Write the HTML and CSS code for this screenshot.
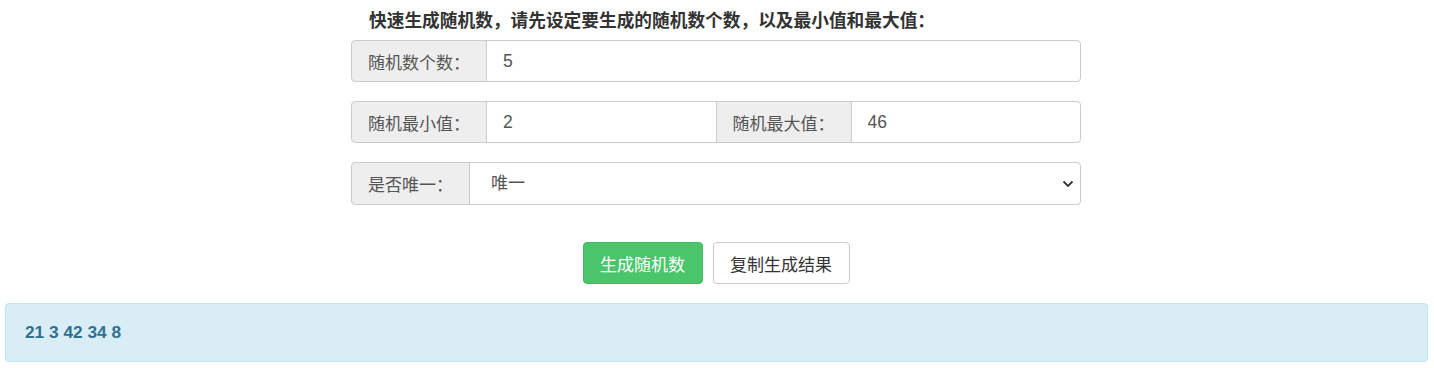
FILE: index.html
```html
<!DOCTYPE html>
<html lang="zh-CN">
<head>
    <meta charset="UTF-8">
    <meta name="viewport" content="width=device-width, initial-scale=1.0">
    <title>随机数生成器</title>
    <link rel="stylesheet" href="styles.css">
</head>
<body>
    <div class="container">
        <h3 class="intro">快速生成随机数，请先设定要生成的随机数个数，以及最小值和最大值：</h3>

        <div class="input-group">
            <span class="addon">随机数个数：</span>
            <input type="text" class="field" value="5">
        </div>

        <div class="input-group">
            <span class="addon">随机最小值：</span>
            <input type="text" class="field" value="2">
            <span class="addon">随机最大值：</span>
            <input type="text" class="field" value="46">
        </div>

        <div class="input-group select-group">
            <span class="addon">是否唯一：</span>
            <select class="field">
                <option value="1">唯一</option>
                <option value="0">不唯一</option>
            </select>
            <svg class="chevron" width="12" height="8" viewBox="0 0 12 8">
                <path d="M1.5 1.5 L6 6 L10.5 1.5" fill="none" stroke="#333" stroke-width="1.8"/>
            </svg>
        </div>

        <div class="actions">
            <button class="btn btn-green">生成随机数</button>
            <button class="btn btn-default">复制生成结果</button>
        </div>
    </div>

    <div class="alert">21 3 42 34 8</div>
</body>
</html>
```

FILE: styles.css
```css
body {
    font-family: "Liberation Sans", Arial, "Noto Sans CJK SC", sans-serif;
    margin: 0;
    padding: 0;
    background-color: #fff;
    color: #333;
}
.container {
    width: 730px;
    margin: 0 auto;
    padding: 8px 2px 0 0;
}
.intro {
    margin: 0 0 6px 18px;
    font-size: 17.7px;
    line-height: 26px;
    font-weight: bold;
    color: #333;
}
.input-group {
    display: flex;
    height: 42px;
    margin-bottom: 19px;
    position: relative;
}
.addon {
    display: flex;
    align-items: center;
    padding: 0 16px;
    font-size: 17px;
    color: #555;
    background-color: #eee;
    border: 1px solid #ccc;
    white-space: nowrap;
}
.input-group > .addon:first-child {
    border-radius: 4px 0 0 4px;
}
.input-group > * + * {
    margin-left: -1px;
}
.field {
    flex: 1;
    min-width: 0;
    box-sizing: border-box;
    height: 100%;
    padding: 0 16px;
    font-family: inherit;
    font-size: 17.5px;
    color: #555;
    background: #fff;
    border: 1px solid #ccc;
    outline: none;
}
.input-group > .field:last-of-type {
    border-radius: 0 4px 4px 0;
}
.select-group {
    height: 43px;
}
.select-group select {
    appearance: none;
    -webkit-appearance: none;
    padding-left: 21px;
    font-size: 17px;
}
.chevron {
    position: absolute;
    right: 7px;
    top: 18px;
}
.actions {
    display: flex;
    justify-content: center;
    gap: 10px;
    margin-top: 37px;
    margin-bottom: 19px;
}
.btn {
    height: 42px;
    padding: 0 16.5px;
    font-family: inherit;
    font-size: 17px;
    border-radius: 4px;
    border: 1px solid transparent;
    cursor: pointer;
}
.btn-green {
    color: #fff;
    background-color: #4bc56b;
    border-color: #44bb63;
}
.btn-default {
    color: #333;
    background-color: #fff;
    border-color: #ccc;
}
.alert {
    margin: 0 6px 0 5px;
    height: 59px;
    box-sizing: border-box;
    display: flex;
    align-items: center;
    padding: 0 19px;
    font-size: 17.3px;
    font-weight: bold;
    color: #31708f;
    background-color: #d9edf7;
    border: 1px solid #bce8f1;
    border-radius: 4px;
}
```
